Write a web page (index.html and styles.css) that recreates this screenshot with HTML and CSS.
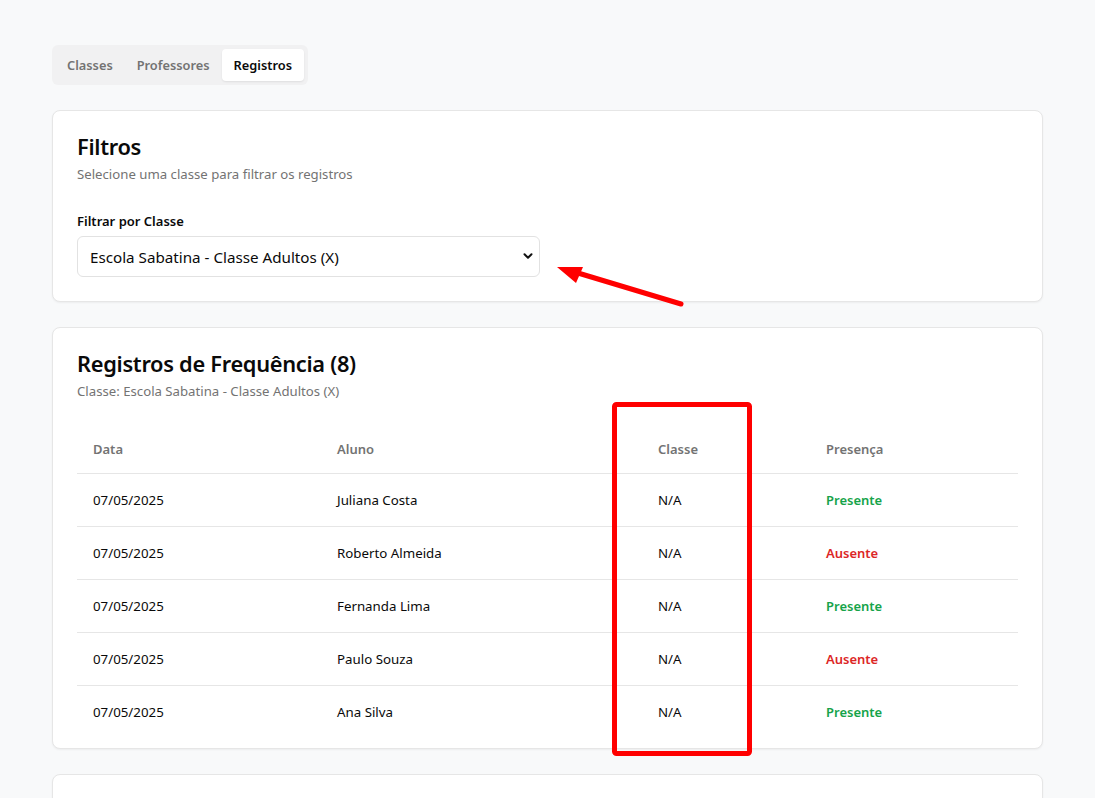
FILE: index.html
```html
<!DOCTYPE html>
<html lang="pt-BR">
<head>
<meta charset="utf-8">
<title>Registros</title>
<link rel="stylesheet" href="styles.css">
</head>
<body>
<div class="page">
  <div class="tabs">
    <button class="tab">Classes</button>
    <button class="tab">Professores</button>
    <button class="tab active">Registros</button>
  </div>

  <section class="card">
    <div class="card-header">
      <h2 class="card-title">Filtros</h2>
      <p class="card-desc">Selecione uma classe para filtrar os registros</p>
    </div>
    <div class="card-content">
      <label class="label" for="classe">Filtrar por Classe</label>
      <div class="select-wrap">
        <select id="classe" class="select">
          <option>Escola Sabatina - Classe Adultos (X)</option>
        </select>
        <svg class="chev" width="12" height="12" viewBox="0 0 12 12"><path d="M2.5 4.2 L6 7.8 L9.5 4.2" fill="none" stroke="#111" stroke-width="2" stroke-linecap="round" stroke-linejoin="round"/></svg>
      </div>
    </div>
  </section>

  <section class="card">
    <div class="card-header">
      <h2 class="card-title">Registros de Frequência (8)</h2>
      <p class="card-desc">Classe: Escola Sabatina - Classe Adultos (X)</p>
    </div>
    <div class="card-content table-content">
      <table class="table">
        <thead>
          <tr><th class="c1">Data</th><th class="c2">Aluno</th><th class="c3">Classe</th><th class="c4">Presença</th></tr>
        </thead>
        <tbody>
          <tr><td>07/05/2025</td><td>Juliana Costa</td><td>N/A</td><td class="present">Presente</td></tr>
          <tr><td>07/05/2025</td><td>Roberto Almeida</td><td>N/A</td><td class="absent">Ausente</td></tr>
          <tr><td>07/05/2025</td><td>Fernanda Lima</td><td>N/A</td><td class="present">Presente</td></tr>
          <tr><td>07/05/2025</td><td>Paulo Souza</td><td>N/A</td><td class="absent">Ausente</td></tr>
          <tr><td>07/05/2025</td><td>Ana Silva</td><td>N/A</td><td class="present">Presente</td></tr>
        </tbody>
      </table>
    </div>
  </section>

  <section class="card card-empty"></section>

  <svg class="annot" width="1095" height="798" viewBox="0 0 1095 798">
    <rect x="614.5" y="404.5" width="135" height="349" rx="2" fill="none" stroke="#ff0000" stroke-width="5"/>
    <line x1="681" y1="304" x2="578" y2="273" stroke="#ff0000" stroke-width="5" stroke-linecap="round"/>
    <polygon points="557,267 583,267 576,283" fill="#ff0000"/>
  </svg>
</div>
</body>
</html>
```

FILE: styles.css
```css
* { box-sizing: border-box; }
html, body { margin: 0; padding: 0; }
body {
  background: #f8f9fa;
  font-family: "Noto Sans", "Open Sans", sans-serif;
  color: #0a0a0a;
  width: 1095px;
  height: 798px;
  overflow: hidden;
}
.page {
  position: relative;
  padding: 45px 52px 0 52px;
  display: flex;
  flex-direction: column;
  gap: 25px;
  height: 798px;
  overflow: hidden;
}
.tabs {
  align-self: flex-start;
  display: flex;
  align-items: center;
  background: #f1f1f2;
  border-radius: 6px;
  padding: 4px;
  height: 40px;
}
.tab {
  font-family: inherit;
  font-size: 12.8px;
  font-weight: 600;
  color: #737373;
  background: transparent;
  border: 0;
  border-radius: 4px;
  padding: 0 12px;
  height: 32px;
  cursor: pointer;
}
.tab:first-child { padding-left: 11px; }
.tab.active {
  background: #fff;
  color: #0a0a0a;
  box-shadow: 0 1px 2px rgba(0,0,0,0.08);
}
.card {
  background: #fff;
  border: 1px solid #e6e6e6;
  border-radius: 8px;
  box-shadow: 0 1px 2px rgba(0,0,0,0.05);
  flex-shrink: 0;
}
.card-header {
  padding: 24px;
  display: flex;
  flex-direction: column;
  gap: 5px;
}
.card-title {
  margin: 0;
  font-size: 21.8px;
  font-weight: 600;
  line-height: 24px;
  letter-spacing: -0.3px;
}
.card-desc {
  margin: 0;
  font-size: 13.2px;
  line-height: 20px;
  color: #737373;
}
.card-content {
  padding: 0 24px 24px 24px;
  display: flex;
  flex-direction: column;
  gap: 5px;
}
.label {
  font-size: 13px;
  font-weight: 600;
  line-height: 20px;
  padding-top: 3px;
  color: #0a0a0a;
}
.select-wrap {
  position: relative;
  width: 463px;
}
.select {
  appearance: none;
  -webkit-appearance: none;
  width: 100%;
  height: 41px;
  border: 1px solid #e2e2e2;
  border-radius: 6px;
  background: #fff;
  padding: 0 30px 0 12px;
  font-family: inherit;
  font-size: 15.2px;
  color: #0a0a0a;
}
.chev {
  position: absolute;
  right: 6px;
  top: 14px;
  pointer-events: none;
}
.table-content {
  padding-bottom: 10px;
}
.table {
  width: 100%;
  border-collapse: collapse;
  font-size: 13.3px;
}
.table th {
  height: 48px;
  padding: 0 16px;
  text-align: left;
  font-size: 13px;
  font-weight: 600;
  color: #737373;
  border-bottom: 1px solid #e6e6e6;
}
.table td {
  height: 53px;
  padding: 0 16px;
  color: #0a0a0a;
  border-bottom: 1px solid #e6e6e6;
}
.table tbody tr:last-child td {
  border-bottom: 0;
  height: 53px;
}
.c1 { width: 244px; }
.c2 { width: 321px; }
.c3 { width: 168px; }
.table td.present { color: #16a34a; font-weight: 600; font-size: 13px; }
.table td.absent { color: #dc2626; font-weight: 600; font-size: 13px; }
.card-empty {
  height: 60px;
}
.annot {
  position: absolute;
  left: 0;
  top: 0;
  pointer-events: none;
}
```
